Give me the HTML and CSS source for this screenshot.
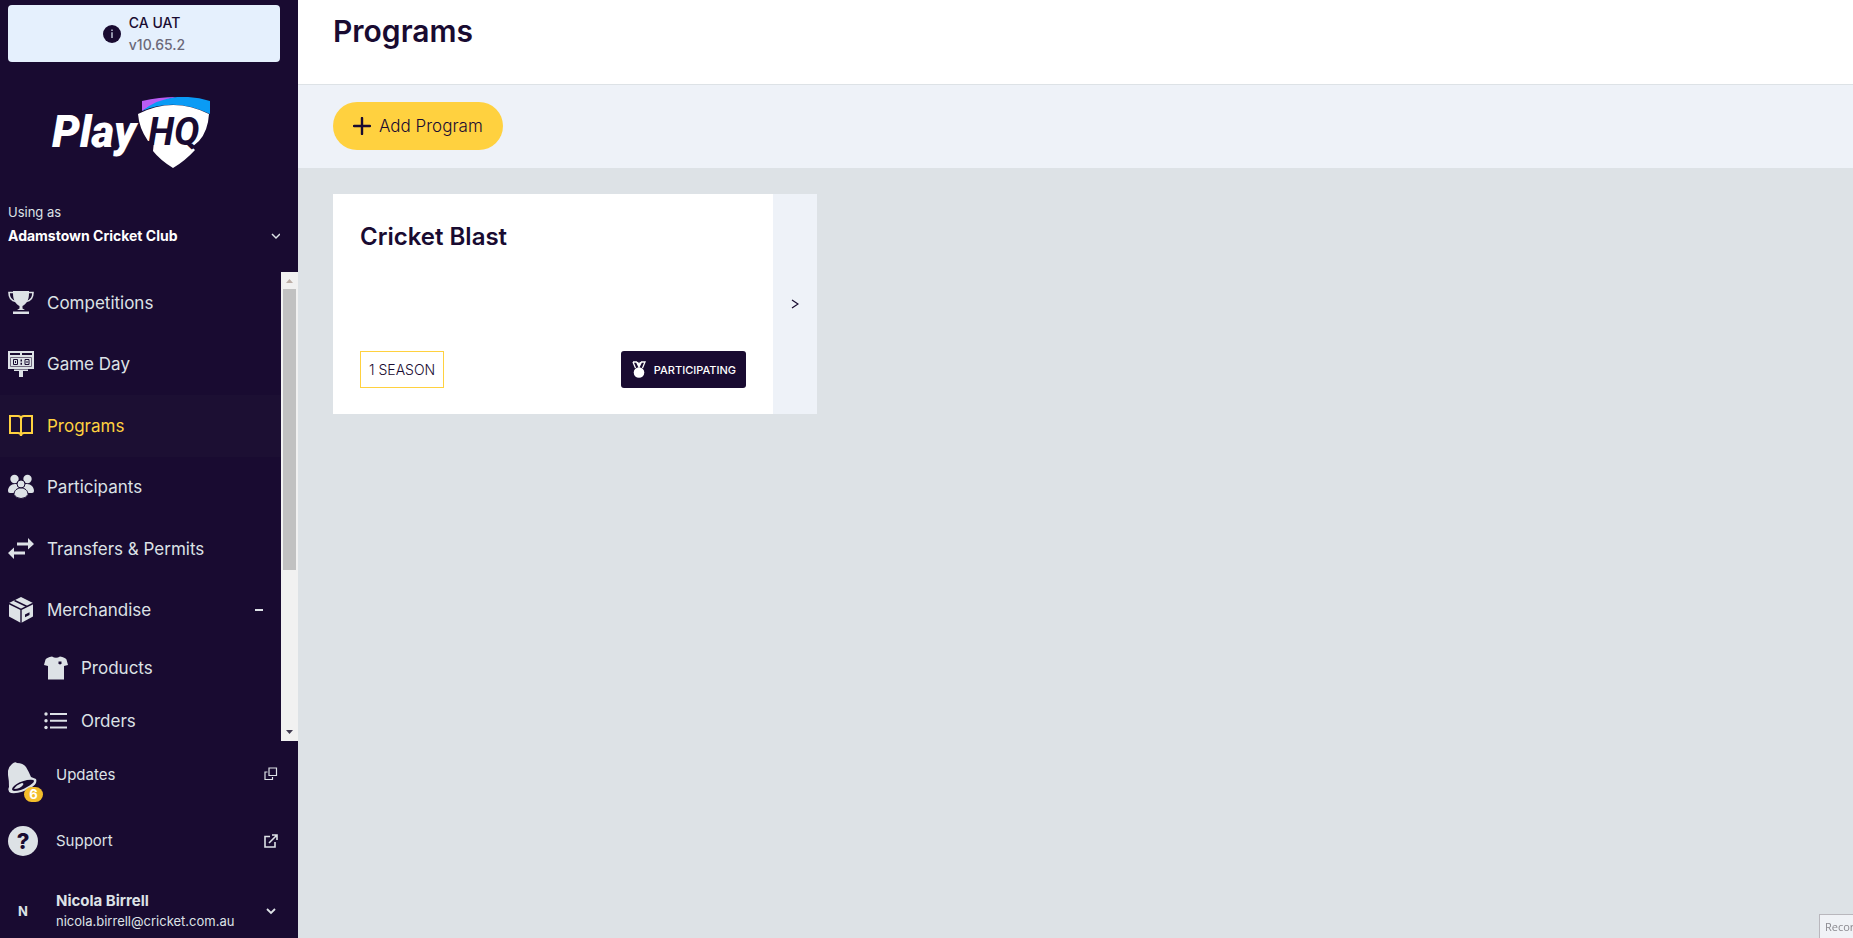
FILE: index.html
```html
<!DOCTYPE html>
<html lang="en">
<head>
  <meta charset="UTF-8" />
  <meta name="viewport" content="width=device-width, initial-scale=1.0"/>
  <title>Programs - PlayHQ</title>
  <link rel="stylesheet" href="styles.css">
</head>
<body>

<aside class="sidebar">
  <div class="env">
    <svg width="18" height="18" viewBox="0 0 18 18">
      <circle cx="9" cy="9" r="9" fill="#190b31"/>
      <path d="M9 7.2V13M9 4.6v1.4" stroke="#e5f0fd" stroke-width="1.2"/>
    </svg>
    <div>
      <div class="env-name">CA UAT</div>
      <div class="env-version">v10.65.2</div>
    </div>
  </div>

  <a class="logo" href="#" aria-label="PlayHQ">
    <svg width="160" height="72" viewBox="0 0 160 72">
      <path d="M91 4Q108 0 126 0Q106 4 91 14Z" fill="#b95cf4"/>
      <path d="M91 14Q106 2 126 0Q143 -1 159 4V17Q124 0 91 14Z" fill="#0a9bf5"/>
      <path d="M87 17Q122 -1 158 17Q157 34 148 44L141 50L144 53Q134 64 122 71Q109 63 102 54L103 44L97 44Q88 31 87 17Z" fill="#fff"/>
      <text class="logo-play" x="1" y="50">Play</text>
      <text class="logo-hq" x="97" y="48">HQ</text>
    </svg>
  </a>

  <button class="account">
    <span class="account-label">Using as</span>
    <span class="account-row">
      <span>Adamstown Cricket Club</span>
      <svg width="10" height="8" viewBox="0 0 10 8"><path d="M2 2l4 4 4-4" fill="none" stroke="#dde2e6" stroke-width="1.5"/></svg>
    </span>
  </button>

  <div class="menu-wrap">
    <nav class="menu">
      <ul class="menu-list">
        <li><a href="#">
          <svg width="26" height="26" viewBox="0 0 26 26" fill="#dde2e6">
            <path d="M5 1h16v2.500c0 7-3 10.500-6.500 12.500v2.500L17 20H9l2.500-1.500V16C8 14 5 10.500 5 3.500z"/>
            <path d="M5 2.500H1C1 8 4 11 8 11.500M21 2.500h4c0 5.500-3 8.500-7 9" fill="none" stroke="#dde2e6" stroke-width="1.600"/>
            <path d="M5 21.500h16V24H5z"/>
          </svg>
          <span>Competitions</span>
        </a></li>
        <li><a href="#">
          <svg width="26" height="28" viewBox="0 0 26 28">
            <path d="M0 1h26v18H0z" fill="#dde2e6"/>
            <path d="M2 3h10v2H2zM14 3h10v2H14z" fill="#190b31"/>
            <path d="M2.500 7.500h21v9h-21z" fill="none" stroke="#71697f"/>
            <path d="M5.500 9.500h4v5h-4zM17 9.500h4v5h-4z" fill="none" stroke="#190b31"/>
            <path d="M7 11h1v2H7zM18.500 11h1v2h-1zM12.500 9.500h1.500v2h-1.500zM12.500 12.800h1.500v2h-1.500z" fill="#190b31"/>
            <path d="M6 19.500h14V21H15v6h-4v-6H6z" fill="#dde2e6"/>
          </svg>
          <span>Game Day</span>
        </a></li>
        <li class="active"><a href="#" aria-current="page">
          <svg width="26" height="26" viewBox="0 0 26 26" fill="none" stroke="#ffd13f" stroke-width="2">
            <path d="M2 3h8q3 0 3 3 0-3 3-3h8v17h-8q-3 0-3 3 0-3-3-3H2zM13 6v15"/>
          </svg>
          <span>Programs</span>
        </a></li>
        <li><a href="#">
          <svg width="26" height="26" viewBox="0 0 26 26" fill="#dde2e6">
            <circle cx="6.500" cy="5" r="4.200"/><circle cx="19.500" cy="5" r="4.200"/>
            <path d="M0 17c0-4 3-7 7-7 3 0 5 2 5 5l-4 4H2q-2 0-2-2zM26 17c0-4-3-7-7-7-3 0-5 2-5 5l4 4h6q2 0 2-2z"/>
            <g stroke="#190b31"><circle cx="13" cy="10" r="4"/><path d="M6 20.500c0-4 3-6.500 7-6.500s7 2.500 7 6.500q-2 4-7 4t-7-4z"/></g>
          </svg>
          <span>Participants</span>
        </a></li>
        <li><a href="#">
          <svg width="26" height="26" viewBox="0 0 26 26" fill="#dde2e6">
            <path d="M9 6.500h11V2l6 6-6 5.500V9.500H9zM17 15.500v3H6V23l-6-6 6-5.500v4z"/>
          </svg>
          <span>Transfers &amp; Permits</span>
        </a></li>
        <li><a href="#">
          <svg width="26" height="26" viewBox="0 0 26 26">
            <path d="M13 0l12 6v13.500L13 26 1 19.500V6z" fill="#dde2e6"/>
            <path d="M1 6.500l12 6L25 6.500M13 12.500V26M6.500 3.500L19 9.500" fill="none" stroke="#190b31" stroke-width="1.400"/>
            <path d="M17 17.500l4.500-2.300v2.800L17 20.300z" fill="#190b31"/>
          </svg>
          <span>Merchandise</span>
          <svg class="toggle" width="8" height="2" viewBox="0 0 8 2"><path d="M0 0h8v2H0z" fill="#dde2e6"/></svg>
        </a></li>
      </ul>
      <ul class="submenu">
        <li><a href="#">
          <svg width="24" height="24" viewBox="0 0 24 24">
            <path d="M8 .500Q12 3 16 .500q5 1 6.500 3L24 9l-4 1v13.500H4V10L0 9l1.500-5.500Q3 1.500 8 .500z" fill="#dde2e6"/>
            <path d="M14.500 5.500h3v1.800l-1.500 1.500-1.500-1.500z" fill="#190b31"/>
          </svg>
          <span>Products</span>
        </a></li>
        <li><a href="#">
          <svg width="24" height="18" viewBox="0 0 24 18" fill="#dde2e6">
            <circle cx="2" cy="2" r="1.700"/><circle cx="2" cy="8.700" r="1.700"/><circle cx="2" cy="15.500" r="1.700"/>
            <path d="M6 1h17v2H6zM6 7.700h17v2H6zM6 14.500h17v2H6z"/>
          </svg>
          <span>Orders</span>
        </a></li>
      </ul>
    </nav>
    <div class="scrollbar">
      <svg width="17" height="17" viewBox="0 0 17 17"><path d="M5 11l3.500-4L12 11z" fill="#bcaea6"/></svg>
      <div class="thumb"></div>
      <svg width="17" height="17" viewBox="0 0 17 17"><path d="M5 6l3.500 4L12 6z" fill="#403a50"/></svg>
    </div>
  </div>

  <div class="links">
    <a class="updates" href="#">
      <span class="bell">
        <svg width="30" height="32" viewBox="0 0 30 32">
          <path d="M4 2q3-3 5-1 6 0 9 4 3 5 5 10l5 2q2 5-6 9-9 6-19 5-4-2-2-6Q1 18 0 13-1 6 4 2z" fill="#dde2e6"/>
          <path d="M26 19q0-2-7-1-9 2-13 6-4 4 0 5 7 0 13-4 7-4 7-6z" fill="#190b31"/>
          <path d="M6 27q2-4 8-6 2 0 1 2-3 4-9 4z" fill="#dde2e6"/>
        </svg>
        <span class="count">6</span>
      </span>
      <span>Updates</span>
      <svg class="end" width="14" height="14" viewBox="0 0 14 14" fill="none" stroke="#dde2e6" stroke-width="1.200"><path d="M5 1h7.500v7.500H5zM3.500 5H1v7.500h7.500V10"/></svg>
    </a>
    <a class="support" href="#">
      <span class="question">?</span>
      <span>Support</span>
      <svg class="end" width="14" height="14" viewBox="0 0 14 14" fill="none" stroke="#dde2e6" stroke-width="1.600"><path d="M6 2.500H1V13h10V8M8 1h5v5M13 1L5 9"/></svg>
    </a>
    <button class="user">
      <span class="initial">N</span>
      <span class="user-text">
        <span class="user-name">Nicola Birrell</span>
        <span class="user-mail">nicola.birrell@cricket.com.au</span>
      </span>
      <svg class="end" width="14" height="8" viewBox="0 0 14 8"><path d="M3 2l4 4 4-4" fill="none" stroke="#dde2e6" stroke-width="1.800"/></svg>
    </button>
  </div>
</aside>

<main class="main">
  <header class="header">
    <h1>Programs</h1>
  </header>
  <div class="toolbar">
    <button class="add">
      <svg width="18" height="18" viewBox="0 0 18 18"><path d="M9 1v16M1 9h16" stroke="#190b31" stroke-width="2.400" stroke-linecap="round"/></svg>
      <span>Add Program</span>
    </button>
  </div>
  <div class="content">
    <article class="card">
      <div class="card-body">
        <h2>Cricket Blast</h2>
        <div class="card-foot">
          <span class="season">1 SEASON</span>
          <span class="status">
            <svg width="14" height="17" viewBox="0 0 14 17">
              <circle cx="7" cy="11.500" r="5.300" fill="#fff"/>
              <path d="M1 1h3.500L7 6l2.500-5H13l-2.500 6M1 1l2.500 6M5.500 1L7 4l1.500-3" fill="none" stroke="#fff" stroke-width="1.300"/>
            </svg>
            <span>PARTICIPATING</span>
          </span>
        </div>
      </div>
      <a class="card-open" href="#" aria-label="Open Cricket Blast">
        <svg width="8" height="10" viewBox="0 0 8 10"><path d="M1 1l6 4-6 4" fill="none" stroke="#190b31" stroke-width="1.300"/></svg>
      </a>
    </article>
  </div>
</main>

<div class="recorder">Recor</div>

</body>
</html>
```
FILE: styles.css
```css
* {
  box-sizing: border-box;
}
body {
  margin: 0;
  display: flex;
  height: 100vh;
  overflow: hidden;
  font-family: Inter, Roboto, sans-serif;
  background: #dde2e6;
  color: #190b31;
}
a {
  color: inherit;
  text-decoration: none;
}
button {
  border: none;
  padding: 0;
  background: none;
  color: inherit;
  font-family: inherit;
  text-align: left;
  cursor: pointer;
}
svg {
  display: block;
  flex: none;
}
ul {
  list-style: none;
  margin: 0;
  padding: 0;
}

/* sidebar */
.sidebar {
  flex: none;
  width: 298px;
  display: flex;
  flex-direction: column;
  background: #190b31;
  color: #dde2e6;
}
.env {
  display: flex;
  align-items: center;
  justify-content: center;
  gap: 8px;
  height: 57px;
  margin: 5px 18px 0 8px;
  border-radius: 4px;
  background: #e5f0fd;
  font-size: 14px;
  font-weight: 500;
  line-height: 22px;
}
.env-name {
  color: #190b31;
}
.env-version {
  color: #6b6878;
}
.logo {
  margin: 35px 0 0 51px;
}
.logo-play {
  fill: #fff;
  font: italic 900 44px Roboto, sans-serif;
}
.logo-hq {
  fill: #190b31;
  font: italic 700 38px Roboto, sans-serif;
}
.account {
  display: flex;
  flex-direction: column;
  margin: 31px 18px 0 8px;
  height: 72px;
}
.account-label {
  font-size: 13px;
  line-height: 24px;
}
.account-row {
  display: flex;
  align-items: center;
  justify-content: space-between;
  width: 100%;
  color: #fff;
  font-size: 14px;
  font-weight: 700;
  line-height: 24px;
}
.menu-wrap {
  flex: 1;
  min-height: 0;
  display: flex;
}
.menu {
  flex: 1;
  overflow: hidden;
  font-size: 17px;
}
.menu a {
  display: flex;
  align-items: center;
  gap: 13px;
  height: 100%;
  padding: 0 18px 0 8px;
}
.menu-list {
  display: flex;
  flex-direction: column;
  height: 369px;
}
.menu-list li {
  flex: 1;
}
.active {
  background: #1c0f33;
  color: #ffd13f;
}
.toggle {
  margin-left: auto;
}
.submenu li {
  height: 53px;
}
.submenu a {
  padding-left: 44px;
}
.scrollbar {
  width: 17px;
  display: flex;
  flex-direction: column;
  background: #f1f1f1;
}
.thumb {
  height: 60%;
  margin: 0 2px auto;
  background: #c1c1c1;
}

.links {
  height: 197px;
  font-size: 15px;
}
.links a,
.user {
  display: flex;
  align-items: center;
  width: 100%;
  padding: 0 20px 0 8px;
}
.end {
  margin-left: auto;
}
.updates {
  height: 66px;
}
.bell {
  position: relative;
  width: 48px;
  padding-top: 8px;
}
.count {
  position: absolute;
  left: 16px;
  bottom: -8px;
  width: 19px;
  height: 15px;
  border-radius: 8px;
  background: #f3bd2b;
  color: #fff;
  font-size: 13px;
  font-weight: 700;
  line-height: 15px;
  text-align: center;
}
.support {
  height: 67px;
}
.question {
  width: 30px;
  height: 30px;
  margin-right: 18px;
  border-radius: 50%;
  background: #dde2e6;
  color: #190b31;
  font-size: 22px;
  font-weight: 800;
  line-height: 30px;
  text-align: center;
}
.user {
  height: 63px;
  padding-top: 10px;
}
.initial {
  width: 48px;
  padding-left: 10px;
  font-size: 13px;
  font-weight: 700;
}
.user-text {
  line-height: 21px;
}
.user-name {
  display: block;
  font-size: 15px;
  font-weight: 700;
}
.user-mail {
  display: block;
  font-size: 13px;
}

/* main */
.main {
  flex: 1;
  min-width: 0;
}
.header {
  height: 85px;
  padding: 12px 35px;
  border-bottom: 1px solid #dde2e6;
  background: #fff;
}
h1 {
  margin: 0;
  font-size: 30px;
  font-weight: 600;
  line-height: 38px;
}
.toolbar {
  padding: 17px 35px 18px;
  background: #eef2f8;
}
.add {
  display: flex;
  align-items: center;
  gap: 8px;
  height: 48px;
  padding: 0 20px;
  border-radius: 24px;
  background: #ffd13f;
  font-size: 17px;
  font-weight: 300;
}
.content {
  padding: 26px 35px;
}
.card {
  display: flex;
  width: 484px;
  height: 220px;
  background: #fff;
}
.card-body {
  flex: 1;
  display: flex;
  flex-direction: column;
  justify-content: space-between;
  padding: 27px 27px 26px;
}
h2 {
  margin: 0;
  font-size: 24px;
  font-weight: 600;
  line-height: 32px;
}
.card-foot {
  display: flex;
  justify-content: space-between;
}
.season {
  height: 37px;
  padding: 0 8px;
  border: 1px solid #ffd13f;
  font-size: 14px;
  font-weight: 300;
  line-height: 35px;
}
.status {
  display: flex;
  align-items: center;
  gap: 8px;
  height: 37px;
  padding: 0 10px 0 11px;
  border-radius: 3px;
  background: #190b31;
  color: #fff;
  font-size: 11px;
  font-weight: 500;
}
.card-open {
  display: flex;
  align-items: center;
  justify-content: center;
  width: 44px;
  background: #eef2f8;
}

/* screen recorder tooltip at the window edge */
.recorder {
  position: fixed;
  right: 0;
  bottom: 0;
  width: 34px;
  height: 24px;
  padding-left: 5px;
  border: 1px solid #b9b7bd;
  border-width: 1px 0 0 1px;
  background: #f0f2f6;
  color: #8b8a90;
  font: 11px/24px "Open Sans", sans-serif;
  white-space: nowrap;
}
```
